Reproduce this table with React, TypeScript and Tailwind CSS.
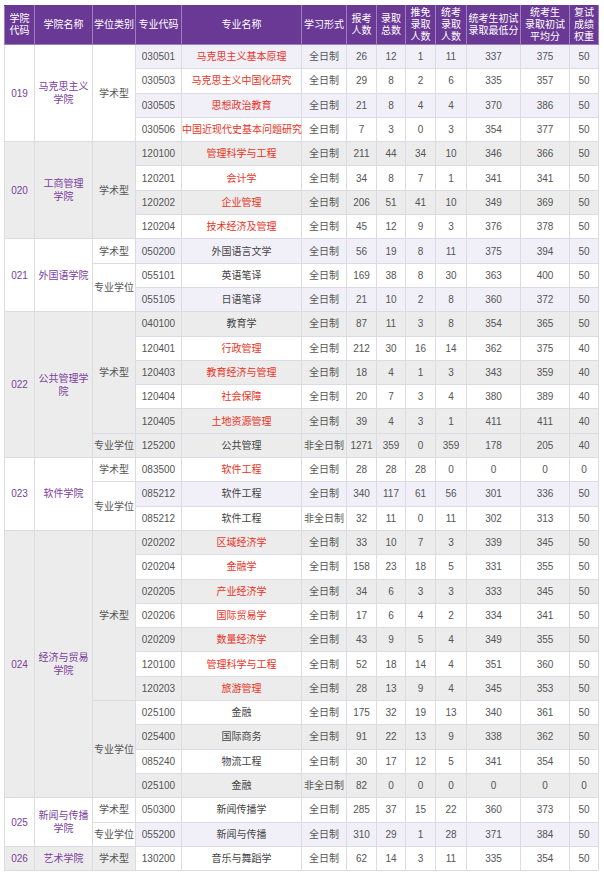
type Major = {
  code: string;
  name: string;
  hot?: boolean;
  form?: string;
  nums: (string | number)[];
  bg: 'w' | 'g' | 'l';
};

type Group = { type: string; rows: Major[] };

type College = { code: string; name: string[]; shade: 'w' | 'g'; groups: Group[] };

const colleges: College[] = [
  {
    code: '019',
    name: ['马克思主义', '学院'],
    shade: 'w',
    groups: [
      {
        type: '学术型',
        rows: [
          { code: '030501', name: '马克思主义基本原理', hot: true, nums: [26, 12, 1, 11, 337, 375, 50], bg: 'l' },
          { code: '030503', name: '马克思主义中国化研究', hot: true, nums: [29, 8, 2, 6, 335, 357, 50], bg: 'w' },
          { code: '030505', name: '思想政治教育', hot: true, nums: [21, 8, 4, 4, 370, 386, 50], bg: 'l' },
          { code: '030506', name: '中国近现代史基本问题研究', hot: true, nums: [7, 3, 0, 3, 354, 377, 50], bg: 'w' },
        ],
      },
    ],
  },
  {
    code: '020',
    name: ['工商管理', '学院'],
    shade: 'g',
    groups: [
      {
        type: '学术型',
        rows: [
          { code: '120100', name: '管理科学与工程', hot: true, nums: [211, 44, 34, 10, 346, 366, 50], bg: 'g' },
          { code: '120201', name: '会计学', hot: true, nums: [34, 8, 7, 1, 341, 341, 50], bg: 'w' },
          { code: '120202', name: '企业管理', hot: true, nums: [206, 51, 41, 10, 349, 369, 50], bg: 'g' },
          { code: '120204', name: '技术经济及管理', hot: true, nums: [45, 12, 9, 3, 376, 378, 50], bg: 'w' },
        ],
      },
    ],
  },
  {
    code: '021',
    name: ['外国语学院'],
    shade: 'w',
    groups: [
      {
        type: '学术型',
        rows: [{ code: '050200', name: '外国语言文学', nums: [56, 19, 8, 11, 375, 394, 50], bg: 'l' }],
      },
      {
        type: '专业学位',
        rows: [
          { code: '055101', name: '英语笔译', nums: [169, 38, 8, 30, 363, 400, 50], bg: 'w' },
          { code: '055105', name: '日语笔译', nums: [21, 10, 2, 8, 360, 372, 50], bg: 'l' },
        ],
      },
    ],
  },
  {
    code: '022',
    name: ['公共管理学', '院'],
    shade: 'g',
    groups: [
      {
        type: '学术型',
        rows: [
          { code: '040100', name: '教育学', nums: [87, 11, 3, 8, 354, 365, 50], bg: 'g' },
          { code: '120401', name: '行政管理', hot: true, nums: [212, 30, 16, 14, 362, 375, 40], bg: 'w' },
          { code: '120403', name: '教育经济与管理', hot: true, nums: [18, 4, 1, 3, 343, 359, 40], bg: 'g' },
          { code: '120404', name: '社会保障', hot: true, nums: [20, 7, 3, 4, 380, 389, 40], bg: 'w' },
          { code: '120405', name: '土地资源管理', hot: true, nums: [39, 4, 3, 1, 411, 411, 40], bg: 'g' },
        ],
      },
      {
        type: '专业学位',
        rows: [{ code: '125200', name: '公共管理', form: '非全日制', nums: [1271, 359, 0, 359, 178, 205, 40], bg: 'g' }],
      },
    ],
  },
  {
    code: '023',
    name: ['软件学院'],
    shade: 'w',
    groups: [
      {
        type: '学术型',
        rows: [{ code: '083500', name: '软件工程', hot: true, nums: [28, 28, 28, 0, 0, 0, 0], bg: 'w' }],
      },
      {
        type: '专业学位',
        rows: [
          { code: '085212', name: '软件工程', nums: [340, 117, 61, 56, 301, 336, 50], bg: 'l' },
          { code: '085212', name: '软件工程', form: '非全日制', nums: [32, 11, 0, 11, 302, 313, 50], bg: 'w' },
        ],
      },
    ],
  },
  {
    code: '024',
    name: ['经济与贸易', '学院'],
    shade: 'g',
    groups: [
      {
        type: '学术型',
        rows: [
          { code: '020202', name: '区域经济学', hot: true, nums: [33, 10, 7, 3, 339, 345, 50], bg: 'g' },
          { code: '020204', name: '金融学', hot: true, nums: [158, 23, 18, 5, 331, 355, 50], bg: 'w' },
          { code: '020205', name: '产业经济学', hot: true, nums: [34, 6, 3, 3, 333, 345, 50], bg: 'g' },
          { code: '020206', name: '国际贸易学', hot: true, nums: [17, 6, 4, 2, 334, 341, 50], bg: 'w' },
          { code: '020209', name: '数量经济学', hot: true, nums: [43, 9, 5, 4, 349, 355, 50], bg: 'g' },
          { code: '120100', name: '管理科学与工程', hot: true, nums: [52, 18, 14, 4, 351, 360, 50], bg: 'w' },
          { code: '120203', name: '旅游管理', hot: true, nums: [28, 13, 9, 4, 345, 353, 50], bg: 'g' },
        ],
      },
      {
        type: '专业学位',
        rows: [
          { code: '025100', name: '金融', nums: [175, 32, 19, 13, 340, 361, 50], bg: 'w' },
          { code: '025400', name: '国际商务', nums: [91, 22, 13, 9, 338, 362, 50], bg: 'g' },
          { code: '085240', name: '物流工程', nums: [30, 17, 12, 5, 341, 354, 50], bg: 'w' },
          { code: '025100', name: '金融', form: '非全日制', nums: [82, 0, 0, 0, 0, 0, 0], bg: 'g' },
        ],
      },
    ],
  },
  {
    code: '025',
    name: ['新闻与传播', '学院'],
    shade: 'w',
    groups: [
      {
        type: '学术型',
        rows: [{ code: '050300', name: '新闻传播学', nums: [285, 37, 15, 22, 360, 373, 50], bg: 'w' }],
      },
      {
        type: '专业学位',
        rows: [{ code: '055200', name: '新闻与传播', nums: [310, 29, 1, 28, 371, 384, 50], bg: 'l' }],
      },
    ],
  },
  {
    code: '026',
    name: ['艺术学院'],
    shade: 'g',
    groups: [
      {
        type: '学术型',
        rows: [{ code: '130200', name: '音乐与舞蹈学', nums: [62, 14, 3, 11, 335, 354, 50], bg: 'w' }],
      },
    ],
  },
];

const widths = [30, 58, 43, 46, 120, 45, 30, 29, 30, 31, 54, 49, 29];

const headers: string[][] = [
  ['学院', '代码'],
  ['学院名称'],
  ['学位类别'],
  ['专业代码'],
  ['专业名称'],
  ['学习形式'],
  ['报考', '人数'],
  ['录取', '总数'],
  ['推免', '录取', '人数'],
  ['统考', '录取', '人数'],
  ['统考生初试', '录取最低分'],
  ['统考生', '录取初试', '平均分'],
  ['复试', '成绩', '权重'],
];

const bgClass = {
  w: 'bg-white',
  g: 'bg-[#ececec]',
  l: 'bg-[#f1f0f9]',
};

const cell = 'border border-[#dcdbe3] text-center align-middle p-0 whitespace-nowrap';

export default function App() {
  return (
    <div className="min-h-screen bg-white pl-[4px] pt-[5px] font-['Liberation_Sans','Noto_Sans_CJK_SC',sans-serif]">
      <table className="table-fixed border-collapse w-[594px] text-[10px] text-[#555]">
        <colgroup>
          {widths.map((w, i) => (
            <col key={i} style={{ width: w }} />
          ))}
        </colgroup>
        <thead>
          <tr className="h-[39px] bg-[#6a3996] text-white">
            {headers.map((lines, i) => (
              <th
                key={i}
                className="border border-[#9b80bb] border-t-[#6a3996] p-0 font-normal leading-[12px] text-center align-middle whitespace-nowrap"
              >
                {lines.map((l, j) => (
                  <div key={j}>{l}</div>
                ))}
              </th>
            ))}
          </tr>
        </thead>
        <tbody>
          {colleges.map((c) => {
            const total = c.groups.reduce((n, g) => n + g.rows.length, 0);
            const shade = bgClass[c.shade];
            return c.groups.map((g, gi) =>
              g.rows.map((r, ri) => {
                const rowBg = bgClass[r.bg];
                return (
                  <tr key={`${c.code}-${gi}-${ri}`} className="h-[24.3px]">
                    {gi === 0 && ri === 0 && (
                      <>
                        <td rowSpan={total} className={`${cell} ${shade} text-[#7a3e9d]`}>
                          {c.code}
                        </td>
                        <td rowSpan={total} className={`${cell} ${shade} text-[#7a3e9d] leading-[13px]`}>
                          {c.name.map((l) => (
                            <div key={l}>{l}</div>
                          ))}
                        </td>
                      </>
                    )}
                    {ri === 0 && (
                      <td rowSpan={g.rows.length} className={`${cell} ${shade}`}>
                        {g.type}
                      </td>
                    )}
                    <td className={`${cell} ${rowBg}`}>{r.code}</td>
                    <td className={`${cell} ${rowBg} ${r.hot ? 'text-[#e8331d]' : 'text-[#444]'}`}>{r.name}</td>
                    <td className={`${cell} ${rowBg}`}>{r.form ?? '全日制'}</td>
                    {r.nums.map((n, k) => (
                      <td key={k} className={`${cell} ${rowBg}`}>
                        {n}
                      </td>
                    ))}
                  </tr>
                );
              })
            );
          })}
        </tbody>
      </table>
    </div>
  );
}
